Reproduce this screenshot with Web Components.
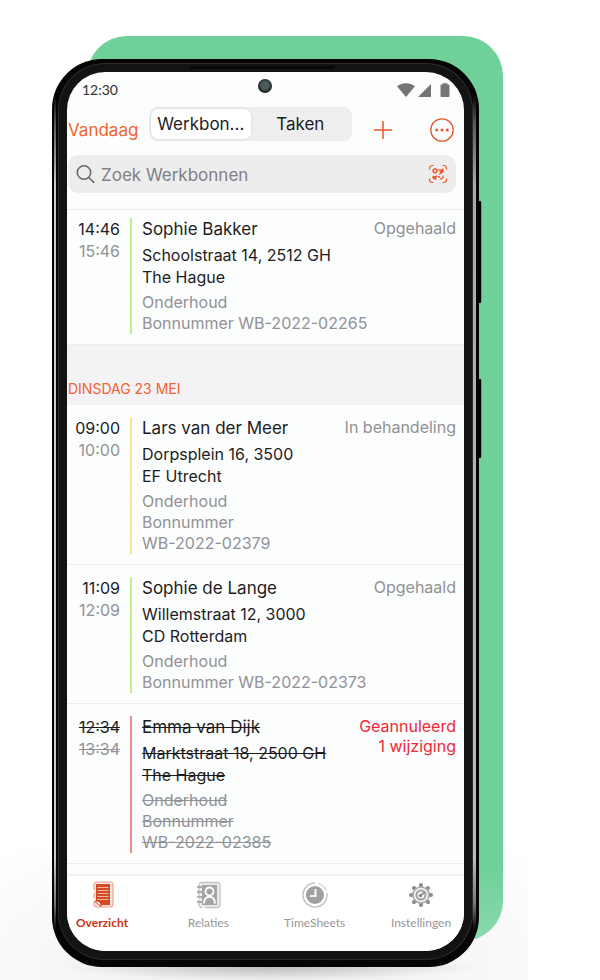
<!DOCTYPE html>
<html lang="nl">
<head>
<meta charset="utf-8">
<meta name="viewport" content="width=device-width, initial-scale=1">
<title>Werkbonnen</title>
<style>
  body {
    margin: 0;
    background: #ffffff;
    font-family: Inter, "Liberation Sans", sans-serif;
    color: #1c1c1e;
    --accent: #e4572e;
    --muted: #919196;
    --line: #ededf0;
  }
</style>
</head>
<body>

<device-stage>
  <phone-frame>
    <status-bar time="12:30"></status-bar>
    <top-bar></top-bar>
    <search-field placeholder="Zoek Werkbonnen"></search-field>
    <job-list>
      <job-item start="14:46" end="15:46" state="done" compact>
        <span slot="name">Sophie Bakker</span>
        <span slot="address">Schoolstraat 14, 2512 GH<br>The Hague</span>
        <span slot="details">Onderhoud<br>Bonnummer WB-2022-02265</span>
        <span slot="status">Opgehaald</span>
      </job-item>
      <day-header>DINSDAG 23 MEI</day-header>
      <job-item start="09:00" end="10:00" state="busy">
        <span slot="name">Lars van der Meer</span>
        <span slot="address">Dorpsplein 16, 3500<br>EF Utrecht</span>
        <span slot="details">Onderhoud<br>Bonnummer<br>WB-2022-02379</span>
        <span slot="status">In behandeling</span>
      </job-item>
      <job-item start="11:09" end="12:09" state="done">
        <span slot="name">Sophie de Lange</span>
        <span slot="address">Willemstraat 12, 3000<br>CD Rotterdam</span>
        <span slot="details">Onderhoud<br>Bonnummer WB-2022-02373</span>
        <span slot="status">Opgehaald</span>
      </job-item>
      <job-item start="12:34" end="13:34" state="cancelled">
        <span slot="name">Emma van Dijk</span>
        <span slot="address">Marktstraat 18, 2500 GH<br>The Hague</span>
        <span slot="details">Onderhoud<br>Bonnummer<br>WB-2022-02385</span>
        <span slot="status">Geannuleerd<br>1 wijziging</span>
      </job-item>
    </job-list>
    <tab-bar>
      <tab-item icon="overview" active>Overzicht</tab-item>
      <tab-item icon="contacts">Relaties</tab-item>
      <tab-item icon="clock">TimeSheets</tab-item>
      <tab-item icon="settings">Instellingen</tab-item>
    </tab-bar>
  </phone-frame>
</device-stage>

<script>
// Small helper: every component renders its template into an open shadow root
class BaseElement extends HTMLElement {
  constructor() {
    super();
    this.attachShadow({ mode: 'open' });
  }

  connectedCallback() {
    this.shadowRoot.innerHTML = this.template();
  }
}

// Green backdrop card with the phone in front of it
class DeviceStage extends BaseElement {
  template() {
    return `
      <style>
        :host {
          display: grid;
          padding-bottom: 13px;
          background:
            radial-gradient(closest-side, rgba(0, 0, 0, 0.2), rgba(0, 0, 0, 0)) 60px 100% / calc(100% - 180px) 26px no-repeat,
            radial-gradient(ellipse at 50% 90%, #ececec, #f8f8f8 60%, rgba(255, 255, 255, 0) 100%) 0 100% / calc(100% - 72px) 130px no-repeat,
            #ffffff;
        }
        .backdrop, .front {
          grid-area: 1 / 1;
        }
        .backdrop {
          margin: 36px 97px 26px 87px;
          border-radius: 40px;
          background: linear-gradient(#6fd09a 92%, #8bdaad);
        }
        .front {
          margin: 59px 121px 0 52px;
          min-width: 0;
        }
      </style>
      <div class="backdrop"></div>
      <div class="front"><slot></slot></div>
    `;
  }
}

// Bezel, camera hole and side buttons
class PhoneFrame extends BaseElement {
  template() {
    return `
      <style>
        :host {
          display: block;
          position: relative;
          padding: 13px 15px 16px 15px;
          border-radius: 50px;
          background:
            linear-gradient(transparent 4%, #55585a 7%, #c9cccd 14%, #c9cccd 88%, #777 93%, transparent 96%) 2px 0 / 2px 100% no-repeat,
            linear-gradient(transparent 4%, #55585a 7%, #a9acad 14%, #b9bcbd 88%, #777 93%, transparent 96%) calc(100% - 3px) 0 / 3px 100% no-repeat,
            #050505;
        }
        .inner {
          border-radius: 38px;
          overflow: hidden;
          background: #fcfdfd;
          box-shadow: 0 0 0 8px #131313, 0 0 0 9px #2c2c2c;
        }
        .camera {
          position: absolute;
          top: 20px;
          left: 50%;
          width: 14px;
          height: 14px;
          margin-left: -8px;
          border-radius: 50%;
          background: radial-gradient(circle at 50% 45%, #4d5b5e 0 35%, #23282a 62%, #17191a);
        }
        .speaker {
          position: absolute;
          top: 7px;
          left: 32%;
          right: 34%;
          height: 3px;
          border-radius: 2px;
          background: #080808;
        }
        .key {
          position: absolute;
          right: -3px;
          width: 4px;
          border-radius: 0 2px 2px 0;
          background: linear-gradient(90deg, #000 75%, #8a8a8a 75%);
        }
        .volume {
          top: 142px;
          height: 102px;
        }
        .power {
          top: 320px;
          height: 79px;
        }
      </style>
      <div class="key volume"></div>
      <div class="key power"></div>
      <div class="inner"><slot></slot></div>
      <div class="speaker"></div>
      <div class="camera"></div>
    `;
  }
}

class StatusBar extends BaseElement {
  template() {
    return `
      <style>
        :host {
          display: flex;
          justify-content: space-between;
          align-items: center;
          padding: 8px 13px 0 15px;
          height: 20px;
          font-family: Lato, sans-serif;
          font-size: 14px;
          line-height: 20px;
          color: #303030;
        }
        svg {
          display: block;
        }
      </style>
      <span>${this.getAttribute('time')}</span>
      <svg width="54" height="14" viewBox="0 0 54 14" fill="#757575" aria-hidden="true">
        <path d="M0 3.2C5-.9 13-.9 18 3.2L9 14z"/>
        <path d="M21 14 34 1v13z"/>
        <path d="M45.500 1.500V.3h5v1.200h1a1 1 0 0 1 1 1V13a1 1 0 0 1-1 1h-7a1 1 0 0 1-1-1V2.500a1 1 0 0 1 1-1z"/>
      </svg>
    `;
  }
}

class TopBar extends BaseElement {
  template() {
    return `
      <style>
        :host {
          display: flex;
          align-items: flex-end;
          padding: 7px 10px 0 1px;
        }
        button {
          border: 0;
          padding: 0;
          background: none;
          font: inherit;
          color: inherit;
          cursor: pointer;
        }
        .today {
          height: 30px;
          width: 81px;
          text-align: left;
          font-size: 17px;
          color: #f0642f;
        }
        .segments {
          display: grid;
          grid-template-columns: minmax(0, 1fr) minmax(0, 1fr);
          flex: 1;
          margin-bottom: 4px;
          padding: 2px;
          border-radius: 9px;
          background: #eeeeef;
        }
        .segments button {
          height: 30px;
          border-radius: 7px;
          font-size: 17px;
          white-space: nowrap;
        }
        .segments [aria-pressed="true"] {
          background: #ffffff;
          box-shadow: 0 0 3px rgba(0, 0, 0, 0.12);
        }
        .icon {
          display: grid;
          place-items: center;
          width: 24px;
          height: 30px;
          color: var(--accent);
        }
        .add {
          margin: 0 35px 0 19px;
        }
      </style>
      <button class="today">Vandaag</button>
      <div class="segments" role="group" aria-label="Weergave">
        <button aria-pressed="true">Werkbon...</button>
        <button aria-pressed="false">Taken</button>
      </div>
      <button class="icon add" aria-label="Toevoegen">
        <svg width="20" height="20" viewBox="0 0 20 20" fill="none" stroke="currentColor" stroke-width="1.5">
          <path d="M10 1v18M1 10h18"/>
        </svg>
      </button>
      <button class="icon" aria-label="Meer">
        <svg width="24" height="24" viewBox="0 0 24 24" fill="none" stroke="currentColor" stroke-width="1.3">
          <circle cx="12" cy="12" r="11.2"/>
          <g fill="currentColor" stroke="none">
            <circle cx="6.7" cy="12" r="1.5"/>
            <circle cx="12" cy="12" r="1.5"/>
            <circle cx="17.3" cy="12" r="1.5"/>
          </g>
        </svg>
      </button>
    `;
  }
}

class SearchField extends BaseElement {
  template() {
    const placeholder = this.getAttribute('placeholder');

    return `
      <style>
        :host {
          display: flex;
          align-items: center;
          gap: 6px;
          height: 38px;
          margin: 10px 8px 16px 1px;
          padding: 0 8px;
          border-radius: 10px;
          background: #ededee;
          color: #77777c;
        }
        svg {
          display: block;
        }
        label {
          flex: none;
        }
        input {
          flex: 1;
          min-width: 0;
          border: 0;
          padding: 2px 0 0;
          outline: none;
          background: none;
          font: inherit;
          font-size: 17px;
          line-height: 24px;
        }
        input::placeholder {
          color: #808085;
          opacity: 1;
        }
        button {
          border: 0;
          padding: 0;
          background: none;
          color: #ec5a2c;
        }
      </style>
      <label for="query" aria-label="${placeholder}">
        <svg width="19" height="20" viewBox="0 0 19 20" fill="none" stroke="#68686d" stroke-width="1.6" stroke-linecap="round">
          <circle cx="8" cy="8.5" r="6.7"/>
          <path d="m12.8 13.5 5 5"/>
        </svg>
      </label>
      <input id="query" type="search" placeholder="${placeholder}">
      <button aria-label="Scan code">
        <svg width="20" height="20" viewBox="0 0 20 20" fill="none" stroke="currentColor" stroke-width="1.2">
          <path d="M1.500 5.500V4.500a3 3 0 0 1 3-3h1M14.500 1.500h1a3 3 0 0 1 3 3v1M18.500 14.500v1a3 3 0 0 1-3 3h-1M5.500 18.500h-1a3 3 0 0 1-3-3v-1"/>
          <circle cx="7" cy="6.800" r="1.900" stroke-width="1.5"/>
          <path d="M9.500 6h2M11 10.500l3-2M12 15.200c2 0 3.500-1.500 3.200-3.700"/>
          <g fill="currentColor" stroke="none">
            <path d="M11.500 5l1.500.7 1.200-1.200 1.500.5v3l-2 1.800-2.200-2z"/>
            <path d="M4.500 11.500l2 .8 2-1 1 1.500-1.500 1.200 1 1.500H6l-1.500-1z"/>
            <circle cx="11" cy="13" r="1"/>
          </g>
        </svg>
      </button>
    `;
  }
}

class JobList extends BaseElement {
  template() {
    return `
      <style>
        :host {
          display: block;
          border-top: 1px solid var(--line);
          padding-bottom: 10px;
        }
      </style>
      <slot></slot>
    `;
  }
}

class DayHeader extends BaseElement {
  template() {
    return `
      <style>
        :host {
          display: block;
          padding: 34px 1px 6px;
          background: #f3f3f6;
          font-size: 14px;
          line-height: 20px;
          color: #f0642f;
        }
      </style>
      <slot></slot>
    `;
  }
}

// One work order: times, coloured state bar, description and status
class JobItem extends BaseElement {
  template() {
    return `
      <style>
        :host {
          display: grid;
          grid-template-columns: 53px 2px minmax(0, 1fr) auto;
          column-gap: 10px;
          padding: 12px 8px 10px 0;
          border-bottom: 1px solid var(--line);
          line-height: 22px;
          white-space: nowrap;
          --bar: #c5ef86;
        }
        :host([compact]) {
          padding-top: 8px;
        }
        :host([state="busy"]) {
          --bar: #fbe58a;
        }
        :host([state="cancelled"]) {
          --bar: #f5868c;
        }
        .times {
          text-align: right;
          font-size: 16px;
        }
        time {
          display: block;
        }
        .end, .details, .status {
          color: var(--muted);
        }
        .bar {
          background: var(--bar);
        }
        .name {
          font-size: 17px;
        }
        .address {
          margin-top: 4px;
          font-size: 16px;
        }
        .details {
          margin-top: 4px;
          font-size: 16px;
          line-height: 21px;
        }
        .status {
          text-align: right;
          font-size: 16px;
          line-height: 20px;
        }
        :host([state="cancelled"]) .times time,
        :host([state="cancelled"]) .text div {
          text-decoration: line-through;
        }
        :host([state="cancelled"]) .status {
          color: #ee2a38;
        }
      </style>
      <div class="times">
        <time>${this.getAttribute('start')}</time>
        <time class="end">${this.getAttribute('end')}</time>
      </div>
      <div class="bar"></div>
      <div class="text">
        <div class="name"><slot name="name"></slot></div>
        <div class="address"><slot name="address"></slot></div>
        <div class="details"><slot name="details"></slot></div>
      </div>
      <div class="status"><slot name="status"></slot></div>
    `;
  }
}

class TabBar extends BaseElement {
  template() {
    return `
      <style>
        :host {
          display: block;
          border-top: 2px solid #f1f2f2;
          background: #ffffff;
        }
        nav {
          display: flex;
          justify-content: space-between;
          padding: 5px 11px 20px 3px;
        }
      </style>
      <nav><slot></slot></nav>
    `;
  }
}

const TAB_ICONS = {
  overview: `
    <rect x="6" y="1" width="19" height="25" rx="3" fill="#fbe3db" stroke="#e9a590" stroke-width="1.2" stroke-dasharray="62 3 5 3 40"/>
    <path d="M8 3h14v21h-9L8 20.500z" fill="#d24a26"/>
    <path d="M9.500 6.500h11M9.500 9.500h11M9.500 12.500h11M9.500 15.500h11M9.500 18.500h11" stroke="#f0b4a2" stroke-width="1.2"/>
    <path d="M7 20.500c2.500-1 6-.5 6 5z" fill="#fff" stroke="#d03b17"/>
  `,
  contacts: `
    <rect x="5" y="1.500" width="21" height="25" rx="3" fill="#ececec" stroke="#c4c4c4" stroke-width="1.3" stroke-dasharray="55 3 10 3"/>
    <path d="M8 4h15v20H8z" fill="#a4a4a4"/>
    <path d="M3 6h5M3 11h5M3 16h5M3 21h5" stroke="#999" stroke-width="1.5"/>
    <circle cx="15.500" cy="10.500" r="4" fill="#a4a4a4" stroke="#fff" stroke-width="1.8"/>
    <path d="M10 22.500c0-9 11-9 11 0" fill="none" stroke="#fff" stroke-width="2"/>
  `,
  clock: `
    <path d="M14 2a12 12 0 1 0 11.800 10" fill="none" stroke="#c2c2c2" stroke-width="1.4"/>
    <path d="M17 2.400a12 12 0 0 1 8 7" fill="none" stroke="#d6d6d6" stroke-width="1.4"/>
    <circle cx="14" cy="14" r="9" fill="#a0a0a0"/>
    <path d="M14.500 8v7H9" fill="none" stroke="#f3f3f3" stroke-width="2.2"/>
  `,
  settings: `
    <g stroke="#8c8c8c" stroke-width="4" stroke-linecap="round">
      <path d="M14 4v1M14 23v1M4 14h1M23 14h1M7 7l.5.5M20.500 20.500l.5.5M21 7l-.5.5M7.500 20.500l-.5.5"/>
    </g>
    <circle cx="14" cy="14" r="8" fill="#f0f0f0" stroke="#a8a8a8" stroke-width="1.5"/>
    <circle cx="14" cy="14" r="4.500" fill="none" stroke="#a4a4a4" stroke-width="2"/>
    <path d="m13.500 15 4-4" stroke="#808080" stroke-width="1.5"/>
    <circle cx="13.500" cy="14.500" r="1.500" fill="#808080"/>
  `
};

class TabItem extends BaseElement {
  template() {
    return `
      <style>
        :host {
          display: block;
          width: 64px;
        }
        a {
          display: flex;
          flex-direction: column;
          align-items: center;
          gap: 6px;
          font-family: Lato, sans-serif;
          font-size: 12px;
          line-height: 16px;
          color: #969696;
          text-decoration: none;
        }
        :host([active]) a {
          font-weight: 700;
          color: #cc3311;
        }
        svg {
          display: block;
        }
      </style>
      <a href="#">
        <svg width="28" height="28" viewBox="0 0 28 28" aria-hidden="true">${TAB_ICONS[this.getAttribute('icon')]}</svg>
        <slot></slot>
      </a>
    `;
  }
}

customElements.define('device-stage', DeviceStage);
customElements.define('phone-frame', PhoneFrame);
customElements.define('status-bar', StatusBar);
customElements.define('top-bar', TopBar);
customElements.define('search-field', SearchField);
customElements.define('job-list', JobList);
customElements.define('day-header', DayHeader);
customElements.define('job-item', JobItem);
customElements.define('tab-bar', TabBar);
customElements.define('tab-item', TabItem);
</script>
</body>
</html>
